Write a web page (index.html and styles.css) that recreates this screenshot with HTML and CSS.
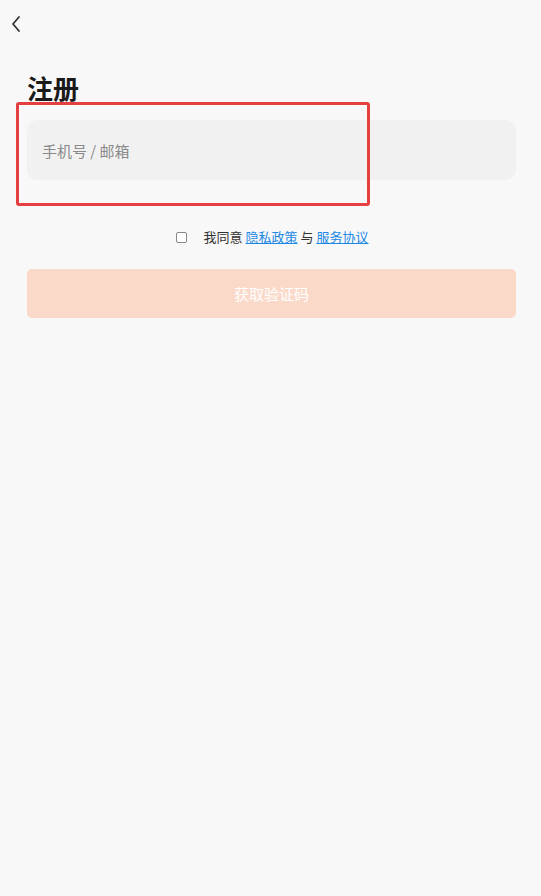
FILE: index.html
```html
<!DOCTYPE html>
<html lang="zh-CN">
<head>
    <meta charset="UTF-8">
    <meta name="viewport" content="width=device-width, initial-scale=1.0">
    <title>注册</title>
    <link rel="stylesheet" href="styles.css">
</head>
<body>
    <div class="page">
        <div class="top-bar">
            <svg class="back" width="12" height="18" viewBox="0 0 12 18">
                <path d="M9 2 L3 9 L9 16" fill="none" stroke="#333" stroke-width="1.8" stroke-linecap="round" stroke-linejoin="round"/>
            </svg>
        </div>
        <h1>注册</h1>
        <div class="field-wrap">
            <input class="field" type="text" placeholder="手机号 / 邮箱">
            <div class="highlight"></div>
        </div>
        <div class="agree">
            <span class="check"></span>
            <span>我同意 <a href="#">隐私政策</a> 与 <a href="#">服务协议</a></span>
        </div>
        <button class="submit" disabled>获取验证码</button>
    </div>
</body>
</html>
```

FILE: styles.css
```css
body {
    margin: 0;
    background-color: #f8f8f8;
    font-family: "Noto Sans CJK SC", "Noto Sans", sans-serif;
}
.page {
    padding: 0 25px 0 27px;
}
.top-bar {
    height: 48px;
    display: flex;
    align-items: center;
    margin-left: -17px;
}
.back {
    display: block;
}
h1 {
    margin: 20px 0 0 0;
    font-size: 26px;
    line-height: 40px;
    font-weight: 700;
    color: #1a1a1a;
}
.field-wrap {
    position: relative;
    margin-top: 12px;
}
.field {
    display: block;
    box-sizing: border-box;
    width: 100%;
    height: 60px;
    border: none;
    border-radius: 10px;
    background: #f1f1f1;
    padding: 0 15px;
    font-family: inherit;
    font-size: 15px;
    outline: none;
}
.field::placeholder {
    color: #8a8a8a;
}
.highlight {
    position: absolute;
    left: -11px;
    top: -18px;
    width: 348px;
    height: 98px;
    border: 3px solid #e5403f;
    border-radius: 3px;
}
.agree {
    display: flex;
    justify-content: center;
    align-items: center;
    margin-top: 47px;
    font-size: 13px;
    color: #333;
    line-height: 20px;
}
.check {
    width: 9px;
    height: 9px;
    border: 1px solid #888;
    border-radius: 2px;
    background: #fff;
    margin-right: 17px;
    margin-left: 1px;
}
.agree a {
    color: #1e88e5;
}
.submit {
    display: block;
    width: 100%;
    height: 49px;
    margin-top: 22px;
    border: none;
    border-radius: 5px;
    background: #fad9c8;
    color: #fff;
    font-family: inherit;
    font-size: 15px;
}
```
